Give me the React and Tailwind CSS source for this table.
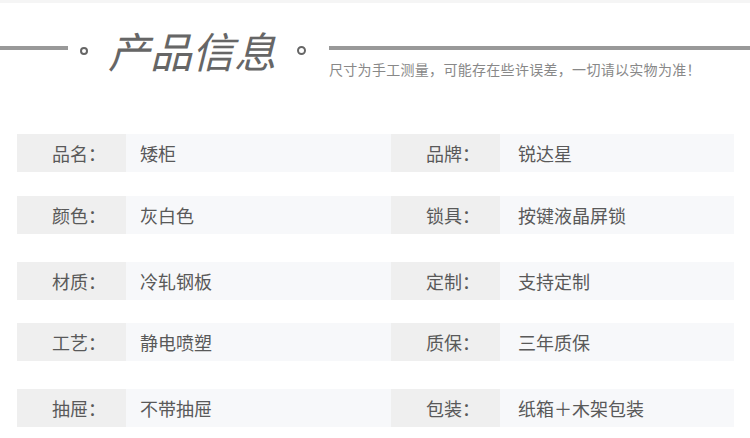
const specs = [
  { top: 'mt-[58px]', left: ['品名：', '矮柜'], right: ['品牌：', '锐达星'] },
  { top: 'mt-[24px]', left: ['颜色：', '灰白色'], right: ['锁具：', '按键液晶屏锁'] },
  { top: 'mt-[28px]', left: ['材质：', '冷轧钢板'], right: ['定制：', '支持定制'] },
  { top: 'mt-[23px]', left: ['工艺：', '静电喷塑'], right: ['质保：', '三年质保'] },
  { top: 'mt-[28px]', left: ['抽屉：', '不带抽屉'], right: ['包装：', '纸箱＋木架包装'] },
];

const font = { fontFamily: '"Noto Sans CJK SC", "Noto Sans", sans-serif' };

function Cell({ label, value, valueWidth, valuePad }) {
  return (
    <div className="flex h-[38px]">
      <div className="w-[109px] bg-[#efefef] pl-[35px] flex items-center text-[18px] text-[#595959]">{label}</div>
      <div className={`${valueWidth} ${valuePad} bg-[#f7f8fa] flex items-center text-[18px] text-[#595959]`}>{value}</div>
    </div>
  );
}

export default function App() {
  return (
    <div className="w-[750px] h-[438px] bg-white overflow-hidden" style={font}>
      <div className="h-[3px] bg-[#f5f5f5]" />

      {/* header */}
      <div className="flex items-start">
        <div className="mt-[43px] h-1 w-[68px] bg-[#999]" />
        <div className="mt-[44px] ml-[12px] w-2 h-2 rounded-full border-2 border-[#666]" />
        <div className="mt-[26px] ml-[20px] text-[42px] leading-none italic text-[#666]">产品信息</div>
        <div className="mt-[43px] ml-[21px] w-[9px] h-[9px] rounded-full border-2 border-[#666]" />
        <div className="ml-[23px] flex-1 flex flex-col">
          <div className="mt-[43px] h-1 bg-[#999]" />
          <div className="mt-[12px] text-[14px] leading-none tracking-[0.3px] text-[#888]">尺寸为手工测量，可能存在些许误差，一切请以实物为准！</div>
        </div>
      </div>

      {/* spec rows */}
      {specs.map((row, i) => (
        <div key={i} className={`${row.top} ml-[17px] flex`}>
          <Cell label={row.left[0]} value={row.left[1]} valueWidth="w-[265px]" valuePad="pl-[14px]" />
          <Cell label={row.right[0]} value={row.right[1]} valueWidth="w-[234px]" valuePad="pl-[18px]" />
        </div>
      ))}
    </div>
  );
}
